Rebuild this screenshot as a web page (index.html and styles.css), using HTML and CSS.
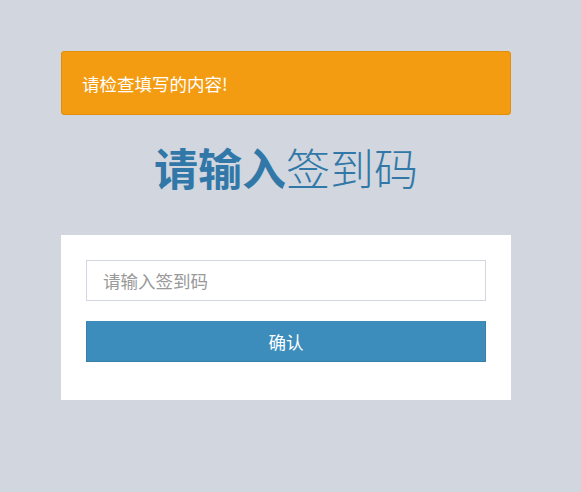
FILE: index.html
```html
<!DOCTYPE html>
<html lang="zh-CN">
<head>
<meta charset="utf-8">
<title>请输入签到码</title>
<link rel="stylesheet" href="styles.css">
</head>
<body>
<div class="wrap">
  <div class="alert">请检查填写的内容!</div>
  <h1 class="logo"><b>请输入</b>签到码</h1>
  <div class="box">
    <input class="field" type="text" placeholder="请输入签到码">
    <button class="btn" type="button">确认</button>
  </div>
</div>
</body>
</html>
```
FILE: styles.css
```css
html, body {
  margin: 0;
  padding: 0;
  background: #d2d6de;
  font-family: "Noto Sans CJK SC", "Noto Sans", sans-serif;
}
.wrap {
  width: 450px;
  margin: 0 0 0 61px;
  padding-top: 51px;
}
.alert {
  box-sizing: border-box;
  height: 64px;
  padding: 0 20px;
  display: flex;
  align-items: center;
  background: #f39c12;
  border: 1px solid #e08e0b;
  border-radius: 3px;
  color: #fff;
  font-size: 17.5px;
}
.logo {
  margin: 16px 0 0;
  height: 104px;
  line-height: 72px;
  text-align: center;
  font-size: 44px;
  font-weight: 300;
  color: #3178a8;
}
.logo b {
  font-weight: 700;
}
.box {
  background: #fff;
  padding: 25px 25px 38px;
  display: flex;
  flex-direction: column;
  gap: 20px;
}
.field {
  box-sizing: border-box;
  height: 41px;
  width: 100%;
  margin: 0;
  padding: 0 16px;
  border: 1px solid #d2d6de;
  font-family: inherit;
  font-size: 17.5px;
  color: #555;
  outline: none;
}
.field::placeholder {
  color: #999;
}
.btn {
  box-sizing: border-box;
  height: 41px;
  width: 100%;
  margin: 0;
  border: 1px solid #367fa9;
  border-top-color: #3c8dbc;
  background: #3c8dbc;
  color: #fff;
  font-family: inherit;
  font-size: 17.5px;
}
```
